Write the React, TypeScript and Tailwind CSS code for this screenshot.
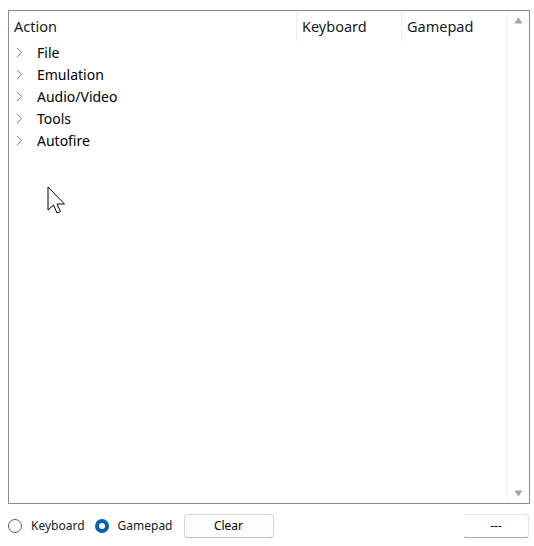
import { ChevronRight } from "lucide-react"

const groups = ["File", "Emulation", "Audio/Video", "Tools", "Autofire"]

function Cursor() {
  return (
    <svg className="absolute left-[47px] top-[186px]" width="20" height="29" viewBox="0 0 20 29">
      <path
        d="M1 1 L1 24 L6.5 19 L10 27 L13.5 25.5 L10 18 L17.5 18 Z"
        fill="#fff"
        stroke="#000"
        strokeWidth="1"
        strokeLinejoin="miter"
      />
    </svg>
  )
}

export default function App() {
  return (
    <div className="relative w-[534px] h-[546px] bg-white text-black font-['Segoe_UI','Noto_Sans',sans-serif] overflow-hidden">
      {/* bindings list */}
      <div className="ml-[8px] mr-[4px] pt-[10px]">
        <div className="flex h-[494px] border border-[#8c8c8c]">
          <div className="flex-1 flex flex-col">
            <div className="flex h-[30px] pt-[1px] text-[14.5px] text-[#1a1a1a]">
              <div className="w-[287px] flex items-center pl-[5px]">Action</div>
              <div className="w-[105px] flex items-center pl-[5px] border-l border-[#ececec]">Keyboard</div>
              <div className="flex-1 flex items-center pl-[5px] border-l border-[#ececec]">Gamepad</div>
            </div>
            <div className="flex flex-col">
              {groups.map((g) => (
                <div key={g} className="flex items-center h-[22px] text-[14px]">
                  <ChevronRight className="ml-[2px] w-[17px] h-[17px] text-[#6e6e6e]" strokeWidth={1.3} />
                  <span className="ml-[9px]">{g}</span>
                </div>
              ))}
            </div>
          </div>
          <div className="w-[22px] flex flex-col items-center justify-between py-[6px] border-l border-[#f3f3f3]">
            <svg width="9" height="7" viewBox="0 0 9 7">
              <path d="M4.5 0.5 L8.5 6.5 L0.5 6.5 Z" fill="#a99fa4" />
            </svg>
            <svg width="9" height="7" viewBox="0 0 9 7">
              <path d="M0.5 0.5 L8.5 0.5 L4.5 6.5 Z" fill="#a99fa4" />
            </svg>
          </div>
        </div>
      </div>

      {/* bottom controls */}
      <div className="flex items-center h-[24px] mt-[10px] ml-[8px] mr-[5px] text-[12px]">
        <label className="flex items-center">
          <span className="w-[14px] h-[14px] rounded-full border border-[#5c5c5c] bg-white" />
          <span className="ml-[9px] text-[#1a1a1a]">Keyboard</span>
        </label>
        <label className="flex items-center ml-[10px]">
          <span className="w-[14px] h-[14px] rounded-full bg-[#005fb8] flex items-center justify-center">
            <span className="w-[6px] h-[6px] rounded-full bg-white" />
          </span>
          <span className="ml-[9px] text-[#1a1a1a]">Gamepad</span>
        </label>
        <button className="ml-[11px] w-[90px] h-[24px] rounded-[4px] border border-[#d6d6d6] border-b-[#bdbdbd] bg-[#fdfdfd] text-[12px]">
          Clear
        </button>
        <button className="ml-auto w-[66px] h-[24px] rounded-[3px] border border-[#e4e4e4] border-b-[#a8a8a8] border-l-transparent bg-white text-[12px]">
          ---
        </button>
      </div>

      <Cursor />
    </div>
  )
}
